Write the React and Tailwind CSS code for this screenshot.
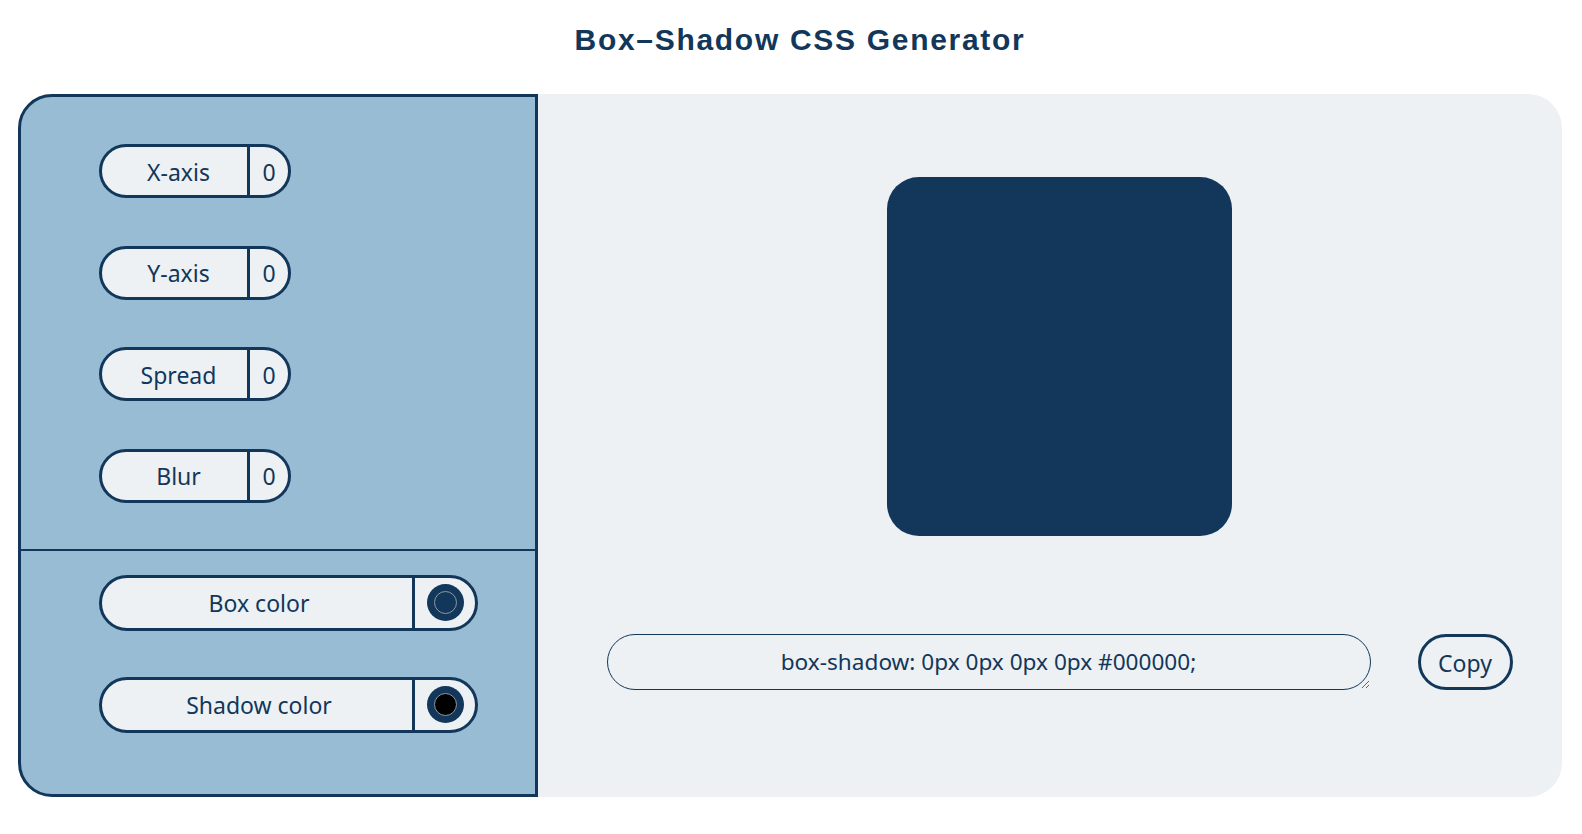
import { useState } from "react";

function ValuePill({ label, value }) {
    return (
        <div className="flex h-[54px] w-[192px] items-center rounded-full border-[3px] border-[#12375a] bg-[#edf1f4]">
            <div className="flex h-full w-[148px] items-center justify-center border-r-[3px] border-[#12375a] pl-2 pt-[2px] text-[23px]">{label}</div>
            <div className="flex-1 pt-[2px] text-center text-[23px]">{value}</div>
        </div>
    );
}

function ColorPill({ label, color }) {
    return (
        <div className="flex h-[56px] w-[379px] items-center rounded-full border-[3px] border-[#12375a] bg-[#edf1f4]">
            <div className="flex h-full w-[313px] items-center justify-center border-r-[3px] border-[#12375a] pl-1 pt-[2px] text-[23px]">{label}</div>
            <div className="flex flex-1 items-center justify-center">
                <div className="flex h-[37px] w-[37px] items-center justify-center rounded-full bg-[#12375a]">
                    <div className="h-[23px] w-[23px] rounded-full border border-[#8a9aa8]" style={{ backgroundColor: color }}></div>
                </div>
            </div>
        </div>
    );
}

export default function App() {

    const [shadow] = useState({ x: 0, y: 0, spread: 0, blur: 0, box: "#12375a", color: "#000000" });

    const css = `box-shadow: ${shadow.x}px ${shadow.y}px ${shadow.blur}px ${shadow.spread}px ${shadow.color};`;

    return (
        <div className="min-h-screen bg-white font-['Noto_Sans',sans-serif] text-[#12375a]">
            <h1 className="pl-[18px] pt-[21px] text-center font-['Liberation_Sans',Arial,sans-serif] text-[30px] font-bold leading-[38px] tracking-[1.7px]">Box–Shadow CSS Generator</h1>

            <div className="ml-[18px] mr-[20px] mt-[35px] flex h-[703px]">

                {/* controls */}
                <div className="flex w-[520px] flex-col rounded-l-[34px] border-[3px] border-[#12375a] bg-[#97bcd4]">
                    <div className="flex flex-col gap-[47.5px] pl-[78px] pt-[47px] pb-[46px]">
                        <ValuePill label="X-axis" value={shadow.x} />
                        <ValuePill label="Y-axis" value={shadow.y} />
                        <ValuePill label="Spread" value={shadow.spread} />
                        <ValuePill label="Blur" value={shadow.blur} />
                    </div>
                    <div className="border-t-2 border-[#12375a]"></div>
                    <div className="flex flex-col gap-[46px] pl-[78px] pt-[24px]">
                        <ColorPill label="Box color" color={shadow.box} />
                        <ColorPill label="Shadow color" color={shadow.color} />
                    </div>
                </div>

                {/* preview */}
                <div className="flex flex-1 flex-col items-center rounded-r-[34px] bg-[#edf1f4] pl-[19px]">
                    <div className="mt-[83px] h-[359px] w-[345px] rounded-[32px] bg-[#12375a]"></div>
                    <div className="mt-[98px] flex items-center gap-[47px]">
                        <textarea
                            readOnly
                            value={css}
                            className="h-[56px] w-[764px] rounded-full border border-[#12375a] bg-[#edf1f4] px-6 py-[11px] text-center text-[22.6px] leading-[32px] text-[#12375a] outline-none"
                        />
                        <button className="h-[56px] w-[95px] rounded-full border-[3px] border-[#12375a] pt-[2px] text-[23px]">Copy</button>
                    </div>
                </div>
            </div>
        </div>
    );
}
